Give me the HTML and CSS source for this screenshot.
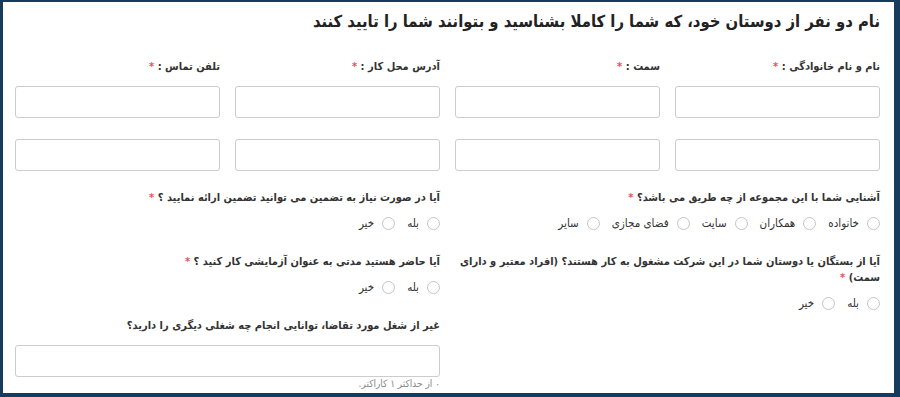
FILE: index.html
```html
<!DOCTYPE html>
<html lang="fa" dir="rtl">
  <head>
    <meta charset="UTF-8" />
    <meta name="viewport" content="width=device-width, initial-scale=1.0" />
    <title>معرف ها</title>
    <link rel="stylesheet" href="styles.css">
  </head>
  <body>
    <div class="frame">
      <h2 class="title">نام دو نفر از دوستان خود، که شما را کاملا بشناسید و بتوانند شما را تایید کنند</h2>
      <form id="refForm">
        <div class="ref-grid">
          <label class="field-label">نام و نام خانوادگی : <span class="req">*</span></label>
          <label class="field-label">سمت : <span class="req">*</span></label>
          <label class="field-label">آدرس محل کار : <span class="req">*</span></label>
          <label class="field-label">تلفن تماس : <span class="req">*</span></label>

          <input type="text" name="name1" />
          <input type="text" name="post1" />
          <input type="text" name="addr1" />
          <input type="tel" name="phone1" />

          <input type="text" name="name2" />
          <input type="text" name="post2" />
          <input type="text" name="addr2" />
          <input type="tel" name="phone2" />
        </div>

        <div class="q-cols">
          <div class="q-col">
            <div class="q">
              <div class="q-label">آشنایی شما با این مجموعه از چه طریق می باشد؟ <span class="req">*</span></div>
              <div class="options">
                <label><input type="radio" name="how" /> خانواده</label>
                <label><input type="radio" name="how" /> همکاران</label>
                <label><input type="radio" name="how" /> سایت</label>
                <label><input type="radio" name="how" /> فضای مجازی</label>
                <label><input type="radio" name="how" /> سایر</label>
              </div>
            </div>
            <div class="q">
              <div class="q-label">آیا از بستگان یا دوستان شما در این شرکت مشغول به کار هستند؟ (افراد معتبر و دارای سمت) <span class="req">*</span></div>
              <div class="options">
                <label><input type="radio" name="relatives" /> بله</label>
                <label><input type="radio" name="relatives" /> خیر</label>
              </div>
            </div>
          </div>
          <div class="q-col">
            <div class="q">
              <div class="q-label">آیا در صورت نیاز به تضمین می توانید تضمین ارائه نمایید ؟ <span class="req">*</span></div>
              <div class="options">
                <label><input type="radio" name="guarantee" /> بله</label>
                <label><input type="radio" name="guarantee" /> خیر</label>
              </div>
            </div>
            <div class="q">
              <div class="q-label">آیا حاضر هستید مدتی به عنوان آزمایشی کار کنید ؟ <span class="req">*</span></div>
              <div class="options">
                <label><input type="radio" name="trial" /> بله</label>
                <label><input type="radio" name="trial" /> خیر</label>
              </div>
            </div>
            <div class="q">
              <div class="q-label">غیر از شغل مورد تقاضا، توانایی انجام چه شغلی دیگری را دارید؟</div>
              <input type="text" name="other" maxlength="1" />
              <div class="hint">۰ از حداکثر ۱ کاراکتر.</div>
            </div>
          </div>
        </div>
      </form>
    </div>
  </body>
</html>
```

FILE: styles.css
```css
html,
body {
  margin: 0;
  height: 100%;
}
body {
  font-family: "DejaVu Sans Condensed", "DejaVu Sans", sans-serif;
  color: #222;
  background: #173b5c;
}
.frame {
  box-sizing: border-box;
  height: 391px;
  margin: 2px 6px 0 3px;
  background: #fff;
  padding: 10px 14px 0 12px;
  overflow: hidden;
}
.title {
  margin: 0 0 29px;
  font-size: 16.5px;
  font-weight: bold;
  color: #222;
}
.ref-grid {
  display: grid;
  grid-template-columns: repeat(4, 1fr);
  column-gap: 15px;
  row-gap: 21px;
}
.field-label {
  font-size: 11px;
  font-weight: bold;
  color: #333;
  margin-bottom: -8px;
}
.req {
  color: #e0565a;
}
input[type="text"],
input[type="tel"] {
  width: 100%;
  height: 32px;
  box-sizing: border-box;
  border: 1px solid #ccc;
  border-radius: 3px;
  padding: 6px 8px;
  font-family: inherit;
}
.q-cols {
  display: flex;
  gap: 15px;
  margin-top: 19px;
}
.q-col {
  flex: 1;
}
.q {
  margin-bottom: 22px;
}
.q-label {
  font-size: 11px;
  font-weight: bold;
  color: #333;
  line-height: 16px;
  margin-bottom: 8px;
}
.options {
  display: flex;
  flex-wrap: wrap;
  gap: 12px;
  font-size: 11.5px;
  color: #333;
  line-height: 18px;
}
.options label {
  display: flex;
  align-items: center;
  gap: 8px;
}
input[type="radio"] {
  appearance: none;
  width: 13px;
  height: 13px;
  margin: 0;
  border: 1px solid #c4c4c4;
  border-radius: 50%;
  background: #fff;
}
.q input[type="text"] {
  margin-top: 3px;
}
.hint {
  margin-top: 1px;
  font-size: 10px;
  color: #888;
}
```
